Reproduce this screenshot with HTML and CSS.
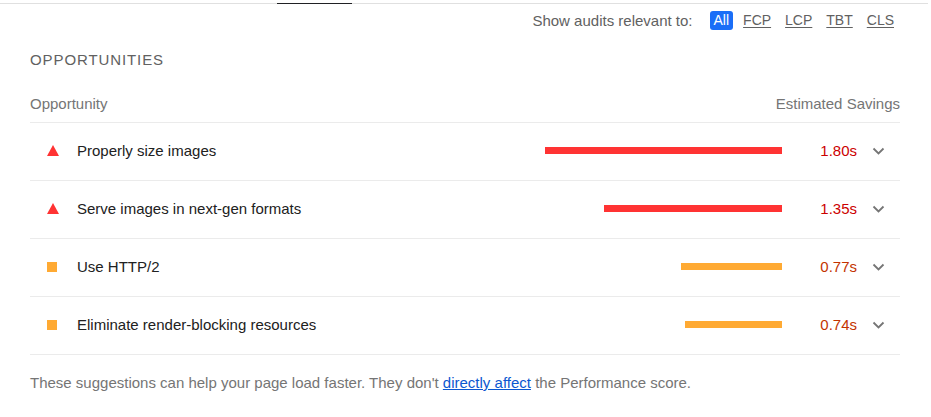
FILE: index.html
```html
<!DOCTYPE html>
<html lang="en">
<head>
<meta charset="utf-8">
<title>Opportunities</title>
<link rel="stylesheet" href="styles.css">
</head>
<body>
<div class="tabs">
  <div class="tab tab-spacer"></div>
  <div class="tab tab-active"></div>
  <div class="tab tab-rest"></div>
</div>
<div class="filter">
  <span class="filter-label">Show audits relevant to:</span>
  <span class="chip chip-active">All</span>
  <span class="chip">FCP</span>
  <span class="chip">LCP</span>
  <span class="chip">TBT</span>
  <span class="chip">CLS</span>
</div>
<section class="group">
  <h2 class="group-title">OPPORTUNITIES</h2>
  <div class="group-header">
    <span>Opportunity</span>
    <span>Estimated Savings</span>
  </div>
  <div class="audit fail">
    <span class="icon"><svg width="12" height="11" viewBox="0 0 12 11"><polygon points="6,0 12,11 0,11" fill="#ff3333"/></svg></span>
    <span class="audit-title">Properly size images</span>
    <span class="bar-wrap"><span class="bar" style="width:237px"></span></span>
    <span class="value">1.80s</span>
    <span class="chev"><svg width="13" height="8" viewBox="0 0 13 8"><path d="M1.5 1.5 L6.5 6.5 L11.5 1.5" fill="none" stroke="#757575" stroke-width="1.8"/></svg></span>
  </div>
  <div class="audit fail">
    <span class="icon"><svg width="12" height="11" viewBox="0 0 12 11"><polygon points="6,0 12,11 0,11" fill="#ff3333"/></svg></span>
    <span class="audit-title">Serve images in next-gen formats</span>
    <span class="bar-wrap"><span class="bar" style="width:178px"></span></span>
    <span class="value">1.35s</span>
    <span class="chev"><svg width="13" height="8" viewBox="0 0 13 8"><path d="M1.5 1.5 L6.5 6.5 L11.5 1.5" fill="none" stroke="#757575" stroke-width="1.8"/></svg></span>
  </div>
  <div class="audit average">
    <span class="icon"><span class="square"></span></span>
    <span class="audit-title">Use HTTP/2</span>
    <span class="bar-wrap"><span class="bar" style="width:101px"></span></span>
    <span class="value">0.77s</span>
    <span class="chev"><svg width="13" height="8" viewBox="0 0 13 8"><path d="M1.5 1.5 L6.5 6.5 L11.5 1.5" fill="none" stroke="#757575" stroke-width="1.8"/></svg></span>
  </div>
  <div class="audit average">
    <span class="icon"><span class="square"></span></span>
    <span class="audit-title">Eliminate render-blocking resources</span>
    <span class="bar-wrap"><span class="bar" style="width:97px"></span></span>
    <span class="value">0.74s</span>
    <span class="chev"><svg width="13" height="8" viewBox="0 0 13 8"><path d="M1.5 1.5 L6.5 6.5 L11.5 1.5" fill="none" stroke="#757575" stroke-width="1.8"/></svg></span>
  </div>
  <p class="group-desc">These suggestions can help your page load faster. They don't <a href="#">directly affect</a> the Performance score.</p>
</section>
</body>
</html>
```

FILE: styles.css
```css
* { box-sizing: border-box; }
html, body { margin: 0; padding: 0; background: #fff; }
body {
  font-family: "Liberation Sans", Arial, sans-serif;
  font-size: 15px;
  color: #212121;
}
.tabs {
  display: flex;
  width: 928px;
  height: 4px;
}
.tab { border-bottom: 1px solid #e0e0e0; }
.tab-spacer { width: 277px; }
.tab-active { width: 75px; border-bottom-color: #202124; }
.tab-rest { flex: 1; }

.filter {
  display: flex;
  justify-content: flex-end;
  align-items: center;
  height: 28px;
  padding-top: 4px;
  padding-right: 33px;
  gap: 6px;
  color: #616161;
  line-height: 19px;
}
.filter-label { margin-right: 11px; }
.chip {
  padding: 0 4px;
  height: 19px;
  font-size: 14px;
  text-decoration: underline;
  text-underline-offset: 2px;
  color: #616161;
  border-radius: 3px;
}
.chip-active {
  background: #1a6ef7;
  color: #fff;
  text-decoration: none;
}

.group { padding: 0 31px 0 30px; }
.group-title {
  margin: 18px 0 0;
  font-size: 15px;
  font-weight: normal;
  line-height: 20px;
  letter-spacing: 0.9px;
  color: #616161;
}
.group-header {
  display: flex;
  justify-content: space-between;
  margin-top: 24px;
  line-height: 20px;
  padding-bottom: 8px;
  border-bottom: 1px solid #ebebeb;
  color: #757575;
}
.audit {
  display: flex;
  align-items: center;
  height: 58px;
  padding-left: 17px;
  padding-right: 15px;
  padding-bottom: 2px;
  border-bottom: 1px solid #ebebeb;
}
.icon {
  width: 12px;
  display: flex;
  align-items: center;
  margin-right: 18px;
}
.icon svg { display: block; margin-top: 0; }
.square {
  display: block;
  width: 10px;
  height: 10px;
  margin-top: 1px;
  background: #ffaa33;
}
.audit-title { color: #212121; }
.bar-wrap {
  flex: 1;
  display: flex;
  justify-content: flex-end;
  align-items: center;
}
.bar {
  display: block;
  height: 7px;
  margin-top: -1px;
}
.fail .bar { background: #ff3333; }
.average .bar { background: #ffaa33; }
.value {
  width: 75px;
  text-align: right;
}
.fail .value { color: #cc0000; }
.average .value { color: #c33300; }
.chev {
  width: 13px;
  margin-left: 15px;
  display: flex;
  align-items: center;
}
.chev svg { display: block; }
.group-desc {
  margin: 18px 0 0;
  line-height: 20px;
  color: #757575;
}
.group-desc a { color: #0b57d0; text-decoration: underline; }
```
